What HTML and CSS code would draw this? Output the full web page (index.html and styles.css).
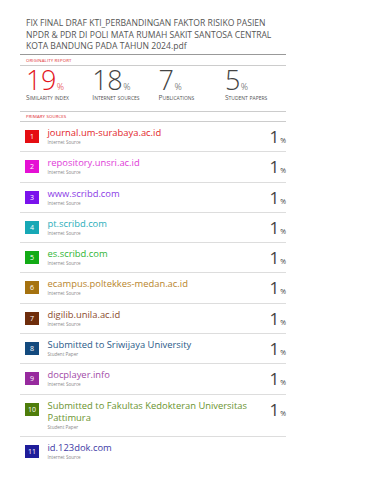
FILE: index.html
```html
<!DOCTYPE html>
<html>
<head>
<meta charset="utf-8">
<link rel="stylesheet" href="styles.css">
</head>
<body>
<div class="page">
  <div class="title">FIX FINAL DRAF KTI_PERBANDINGAN FAKTOR RISIKO PASIEN NPDR &amp; PDR DI POLI MATA RUMAH SAKIT SANTOSA CENTRAL KOTA BANDUNG PADA TAHUN 2024.pdf</div>
  <div class="label label-top">ORIGINALITY REPORT</div>
  <div class="stats">
    <div class="stat stat-main"><div class="num">19<span class="pct">%</span></div><div class="cap">Similarity Index</div></div>
    <div class="stat"><div class="num">18<span class="pct">%</span></div><div class="cap">Internet Sources</div></div>
    <div class="stat"><div class="num">7<span class="pct">%</span></div><div class="cap">Publications</div></div>
    <div class="stat"><div class="num">5<span class="pct">%</span></div><div class="cap">Student Papers</div></div>
  </div>
  <div class="label label-primary">PRIMARY SOURCES</div>
  <div class="rows">
    <div class="row c1"><div class="box">1</div><div class="info"><div class="name">journal.um-surabaya.ac.id</div><div class="type">Internet Source</div></div><div class="perc">1<span>%</span></div></div>
    <div class="row c2"><div class="box">2</div><div class="info"><div class="name">repository.unsri.ac.id</div><div class="type">Internet Source</div></div><div class="perc">1<span>%</span></div></div>
    <div class="row c3"><div class="box">3</div><div class="info"><div class="name">www.scribd.com</div><div class="type">Internet Source</div></div><div class="perc">1<span>%</span></div></div>
    <div class="row c4"><div class="box">4</div><div class="info"><div class="name">pt.scribd.com</div><div class="type">Internet Source</div></div><div class="perc">1<span>%</span></div></div>
    <div class="row c5"><div class="box">5</div><div class="info"><div class="name">es.scribd.com</div><div class="type">Internet Source</div></div><div class="perc">1<span>%</span></div></div>
    <div class="row c6"><div class="box">6</div><div class="info"><div class="name">ecampus.poltekkes-medan.ac.id</div><div class="type">Internet Source</div></div><div class="perc">1<span>%</span></div></div>
    <div class="row c7"><div class="box">7</div><div class="info"><div class="name">digilib.unila.ac.id</div><div class="type">Internet Source</div></div><div class="perc">1<span>%</span></div></div>
    <div class="row c8"><div class="box">8</div><div class="info"><div class="name">Submitted to Sriwijaya University</div><div class="type">Student Paper</div></div><div class="perc">1<span>%</span></div></div>
    <div class="row c9"><div class="box">9</div><div class="info"><div class="name">docplayer.info</div><div class="type">Internet Source</div></div><div class="perc">1<span>%</span></div></div>
    <div class="row c10"><div class="box">10</div><div class="info"><div class="name">Submitted to Fakultas Kedokteran Universitas Pattimura</div><div class="type">Student Paper</div></div><div class="perc">1<span>%</span></div></div>
    <div class="row row-last c11"><div class="box">11</div><div class="info"><div class="name">id.123dok.com</div><div class="type">Internet Source</div></div></div>
  </div>
</div>
</body>
</html>
```

FILE: styles.css
```css
html, body {
  margin: 0;
  padding: 0;
  background: #fff;
}
body {
  font-family: "Open Sans", "Noto Sans", sans-serif;
  color: #555;
}
.page {
  width: 266px;
  padding: 18px 0 0 20px;
}
.title {
  font-size: 8.6px;
  line-height: 11.5px;
  color: #555;
  padding: 0 0 1px 6px;
  border-bottom: 1px solid #999;
}
.label {
  font-size: 4.3px;
  line-height: 6px;
  color: #e0262b;
  padding: 2px 0 2px 6px;
  border-bottom: 1px solid #ccc;
  letter-spacing: 0.15px;
}
.label-primary {
  padding-top: 1.5px;
}
.stats {
  display: flex;
  padding: 0 0 9px 6px;
  border-bottom: 1px solid #ccc;
}
.stat {
  width: 66.3px;
  flex: none;
  color: #444;
}
.num {
  font-size: 27px;
  line-height: 28px;
  letter-spacing: -0.5px;
  font-weight: 300;
}
.stat-main .num {
  color: #e3151d;
}
.pct {
  font-size: 9px;
  line-height: 1;
  letter-spacing: 0;
  margin-left: 1px;
}
.cap {
  font-size: 6.6px;
  line-height: 8px;
  font-variant: small-caps;
  text-transform: lowercase;
  color: #555;
  white-space: nowrap;
}
.cap::first-letter {
  text-transform: uppercase;
}
.row {
  display: flex;
  align-items: flex-start;
  padding: 5px 0 5px 5px;
  border-bottom: 1px solid #ddd;
}
.row-last {
  border-bottom: none;
}
.box {
  width: 14px;
  height: 13px;
  margin-top: 3px;
  flex: none;
  color: #fff;
  font-size: 7px;
  line-height: 13px;
  text-align: center;
}
.info {
  flex: 1;
  margin-left: 8.5px;
  min-width: 0;
}
.name {
  font-size: 9.4px;
  line-height: 12px;
}
.type {
  font-size: 4.6px;
  line-height: 7.3px;
  color: #888;
}
.perc {
  flex: none;
  font-size: 17px;
  line-height: 19.3px;
  font-weight: 400;
  color: #444;
  margin-left: 8px;
}
.perc span {
  font-size: 7px;
  line-height: 1;
  margin-left: 1px;
}
.c1 .box { background: #e50d12; } .c1 .name { color: #e21e2a; }
.c2 .box { background: #e510d4; } .c2 .name { color: #e03ad8; }
.c3 .box { background: #7a12ec; } .c3 .name { color: #8b3be6; }
.c4 .box { background: #17a8b5; } .c4 .name { color: #2aaebb; }
.c5 .box { background: #12ab15; } .c5 .name { color: #2fb535; }
.c6 .box { background: #a5720f; } .c6 .name { color: #b8852b; }
.c7 .box { background: #6e2d0c; } .c7 .name { color: #8a4a2e; }
.c8 .box { background: #134a7e; } .c8 .name { color: #2b5a88; }
.c9 .box { background: #972a9e; } .c9 .name { color: #a24aa7; }
.c10 .box { background: #4e7d0b; } .c10 .name { color: #6b9430; }
.c11 .box { background: #1f1d9a; } .c11 .name { color: #3e3ba6; }
```
